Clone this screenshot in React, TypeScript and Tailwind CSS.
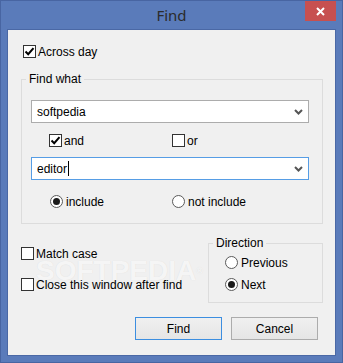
import type { ReactNode } from 'react'

const font = { fontFamily: '"Liberation Sans", Arial, sans-serif' }

function CheckBox({ checked = false, label }: { checked?: boolean; label: string }) {
  return (
    <div className="flex h-[13px] items-center gap-[2px]">
      <div className="flex h-[13px] w-[13px] shrink-0 items-center justify-center border border-[#333333] bg-white">
        {checked && (
          <svg width="11" height="11" viewBox="0 0 11 11">
            <path d="M1.5 5.5 L4.2 8.2 L9.5 2.2" fill="none" stroke="#000" strokeWidth="2" />
          </svg>
        )}
      </div>
      <span className="whitespace-nowrap text-[12px] leading-[14px] text-black">{label}</span>
    </div>
  )
}

function Radio({ checked = false, label }: { checked?: boolean; label: string }) {
  return (
    <div className="flex h-[13px] items-center gap-[3px]">
      <div className="flex h-[13px] w-[13px] shrink-0 items-center justify-center rounded-full border border-[#5a5a5a] bg-white">
        {checked && <div className="h-[7px] w-[7px] rounded-full bg-[#1a1a1a]" />}
      </div>
      <span className="whitespace-nowrap text-[12px] leading-[14px] text-black">{label}</span>
    </div>
  )
}

function Combo({ value, focused = false, caret = false }: { value: string; focused?: boolean; caret?: boolean }) {
  return (
    <div
      className={`flex h-[23px] w-[278px] items-center justify-between border bg-white pl-[5px] pr-[5px] ${
        focused ? 'border-[#569de5]' : 'border-[#acacac]'
      }`}
    >
      <span className="flex items-center text-[12px] leading-[14px] text-black">
        {value}
        {caret && <span className="ml-[1px] inline-block h-[15px] w-[1px] bg-black" />}
      </span>
      <svg width="9" height="6" viewBox="0 0 9 6">
        <path d="M1 1 L4.5 4.5 L8 1" fill="none" stroke="#555" strokeWidth="2" />
      </svg>
    </div>
  )
}

// padding goes on the inner div so the legend stays at the left edge
function Group({ title, className, inner, children }: { title: string; className: string; inner: string; children: ReactNode }) {
  return (
    <fieldset className={`border border-[#dcdcdc] ${className}`}>
      <legend className="ml-[4px] px-[3px] text-[12px] leading-[14px] text-black">{title}</legend>
      <div className={inner}>{children}</div>
    </fieldset>
  )
}

function Button({ label, primary = false }: { label: string; primary?: boolean }) {
  return (
    <button
      type="button"
      className={`h-[23px] w-[87px] border bg-gradient-to-b from-[#f0f0f0] to-[#e5e5e5] text-[12px] leading-[14px] text-black ${
        primary ? 'border-[#3c8ee0]' : 'border-[#acacac]'
      }`}
    >
      {label}
    </button>
  )
}

export default function App() {
  return (
    <div style={font} className="h-[363px] w-[343px] border border-[#4865a2] bg-[#5a7bba] px-[6px]">
      <div className="grid h-[28px] grid-cols-[1fr_auto_1fr]">
        <div />
        <div
          className="flex items-center pt-[1px] text-[15px] text-[#2b2b2b]"
          style={{ fontFamily: '"Noto Sans", "Open Sans", sans-serif' }}
        >
          Find
        </div>
        <div className="flex justify-end">
          <div className="flex h-[20px] w-[31px] items-center justify-center bg-[#c75050]">
            <svg width="9" height="9" viewBox="0 0 9 9">
              <path d="M1 1 L8 8 M8 1 L1 8" stroke="#fff" strokeWidth="2" />
            </svg>
          </div>
        </div>
      </div>

      <div className="relative h-[327px] w-[329px] border border-[#4a68a5] bg-[#f0f0f0] pl-[13px]">
        <div className="ml-[2px] mt-[15px]">
          <CheckBox checked label="Across day" />
        </div>

        <Group title="Find what" className="mt-[14px] w-[302px]" inner="pb-[15px] pl-[9px]">
          <div className="mt-[14px]">
            <Combo value="softpedia" />
          </div>
          <div className="ml-[18px] mt-[11px] flex">
            <div className="w-[123px]">
              <CheckBox checked label="and" />
            </div>
            <CheckBox label="or" />
          </div>
          <div className="mt-[10px]">
            <Combo value="editor" focused caret />
          </div>
          <div className="ml-[19px] mt-[15px] flex">
            <div className="w-[122px]">
              <Radio checked label="include" />
            </div>
            <Radio label="not include" />
          </div>
        </Group>

        <div className="mt-[12px] flex">
          <div className="flex w-[187px] flex-col gap-[18px] pt-[11px]">
            <CheckBox label="Match case" />
            <CheckBox label="Close this window after find" />
          </div>
          <Group title="Direction" className="w-[115px]" inner="pb-[11px] pl-[16px]">
            <div className="mt-[6px] flex flex-col gap-[9px]">
              <Radio label="Previous" />
              <Radio checked label="Next" />
            </div>
          </Group>
        </div>

        <div className="mt-[14px] flex justify-end gap-[9px] pr-[17px]">
          <Button label="Find" primary />
          <Button label="Cancel" />
        </div>

        <div
          className="pointer-events-none absolute left-[28px] top-[227px] text-[28px] font-bold leading-[28px] text-white/75"
          style={{ textShadow: '0 0 1px rgba(0,0,0,0.1)' }}
        >
          SOFTPEDIA<span className="align-top text-[9px]">®</span>
        </div>
      </div>
    </div>
  )
}
